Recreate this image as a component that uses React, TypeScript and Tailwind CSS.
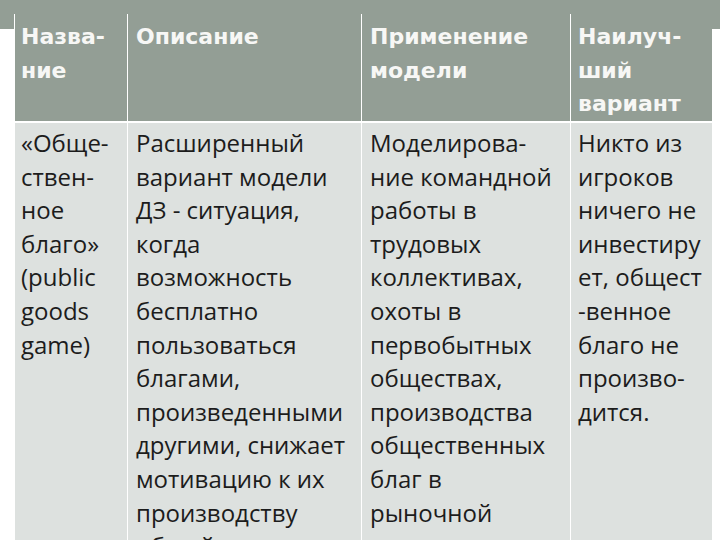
import React from "react";

const head: string[][] = [
  ["Назва-", "ние"],
  ["Описание"],
  ["Применение", "модели"],
  ["Наилуч-", "ший", "вариант"],
];

const body: string[][] = [
  ["«Обще-", "ствен-", "ное", "благо»", "(public", "goods", "game)"],
  [
    "Расширенный",
    "вариант модели",
    "ДЗ - ситуация,",
    "когда",
    "возможность",
    "бесплатно",
    "пользоваться",
    "благами,",
    "произведенными",
    "другими, снижает",
    "мотивацию к их",
    "производству",
    "общей",
  ],
  [
    "Моделирова-",
    "ние командной",
    "работы в",
    "трудовых",
    "коллективах,",
    "охоты в",
    "первобытных",
    "обществах,",
    "производства",
    "общественных",
    "благ в",
    "рыночной",
  ],
  [
    "Никто из",
    "игроков",
    "ничего не",
    "инвестиру",
    "ет, общест",
    "-венное",
    "благо не",
    "произво-",
    "дится.",
  ],
];

const pads = ["pl-[6px]", "pl-[8px]", "pl-[8px]", "pl-[7px]"];

export default function App() {
  return (
    <div className="w-[720px] h-[540px] overflow-hidden bg-[linear-gradient(to_bottom,#939e95_29px,#ffffff_29px)] pl-[14px] pt-[14px]">
      <div className="w-[697px] grid grid-cols-[112px_233px_208px_141px] grid-rows-[107px_600px] gap-x-px gap-y-[2px] bg-white border-l border-white">
        {head.map((lines, i) => (
          <div
            key={"h" + i}
            className={`bg-[#939e95] text-[#f7f7f5] font-bold text-[22px] leading-[33.5px] pt-[6px] ${pads[i]}`}
            style={{ fontFamily: '"DejaVu Sans", Verdana, sans-serif' }}
          >
            {lines.map((l, j) => (
              <div key={j} className="whitespace-nowrap">
                {l}
              </div>
            ))}
          </div>
        ))}
        {body.map((lines, i) => (
          <div
            key={"b" + i}
            className={`bg-[#dde1df] text-[#1c1c1c] text-[24px] leading-[33.6px] pt-[3px] ${pads[i]}`}
            style={{ fontFamily: '"Open Sans", "Noto Sans", sans-serif' }}
          >
            {lines.map((l, j) => (
              <div key={j} className="whitespace-nowrap">
                {l}
              </div>
            ))}
          </div>
        ))}
      </div>
    </div>
  );
}
